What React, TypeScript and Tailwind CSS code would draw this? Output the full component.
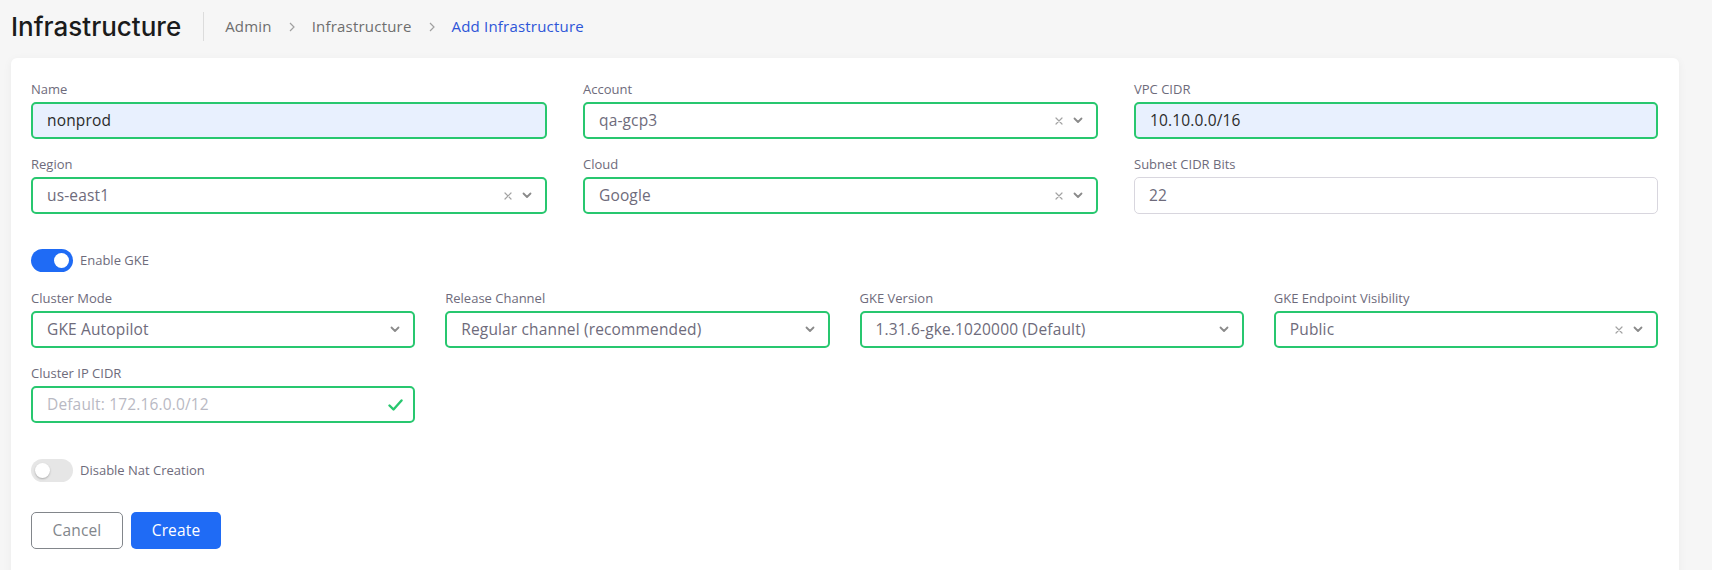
import type { ReactNode } from "react"

const green = "border-[#28c76f]"

function Label({ children }: { children: ReactNode }) {
  return <div className="mb-[4px] text-[13px] leading-[18px] text-[#6e6b7b]">{children}</div>
}

function ClearIcon() {
  return (
    <svg width="8" height="8" viewBox="0 0 8 8" className="shrink-0">
      <path d="M1 1L7 7M7 1L1 7" stroke="#a3a3a3" strokeWidth="1.2" strokeLinecap="round" />
    </svg>
  )
}

function Chevron() {
  return (
    <svg width="10" height="7" viewBox="0 0 10 7" className="shrink-0">
      <path d="M1.5 1.5L5 5L8.5 1.5" stroke="#8a8a8a" strokeWidth="1.8" fill="none" strokeLinecap="round" strokeLinejoin="round" />
    </svg>
  )
}

function Check() {
  return (
    <svg width="15" height="12" viewBox="0 0 15 12" className="shrink-0">
      <path d="M1.5 6.5L5.5 10.5L13.5 1.5" stroke="#28c76f" strokeWidth="2.4" fill="none" strokeLinecap="round" strokeLinejoin="round" />
    </svg>
  )
}

function Crumb() {
  return (
    <span className="mx-[17px]">
      <svg width="6" height="10" viewBox="0 0 6 10">
        <path d="M1 1L5 5L1 9" stroke="#a0a0a0" strokeWidth="1.2" fill="none" />
      </svg>
    </span>
  )
}

const valueText = "text-[15.5px] tracking-[0.15px]"

function TextInput({ value, autofill, valid = true }: { value: string; autofill?: boolean; valid?: boolean }) {
  return (
    <div
      className={`flex h-[37px] items-center rounded-[5px] ${
        valid ? `border-2 ${green} pl-[14px]` : "border border-[#d8d6de] pl-[14px]"
      } ${autofill ? "bg-[#e8f0fe] text-[#2b2b2b]" : "bg-white text-[#6e6b7b]"} ${valueText}`}
    >
      {value}
    </div>
  )
}

function Select({ value, clearable = true }: { value: string; clearable?: boolean }) {
  return (
    <div className={`flex h-[37px] items-center rounded-[5px] border-2 ${green} bg-white pl-[14px] pr-[13px]`}>
      <span className={`flex-1 truncate text-[#6e6b7b] ${valueText}`}>{value}</span>
      {clearable && <ClearIcon />}
      <span className={clearable ? "ml-[10px]" : ""}>
        <Chevron />
      </span>
    </div>
  )
}

function Toggle({ on, label }: { on: boolean; label: string }) {
  return (
    <div className="flex items-center">
      <div
        className={`flex h-[23px] w-[42px] items-center rounded-full px-[4px] ${
          on ? "justify-end bg-[#1f6bf5]" : "justify-start bg-[#e6e6e6]"
        }`}
      >
        <div className={`h-[15px] w-[15px] rounded-full bg-white ${on ? "" : "shadow-[0_1px_2px_rgba(0,0,0,0.25)]"}`} />
      </div>
      <span className="ml-[7px] text-[13px] text-[#6e6b7b]">{label}</span>
    </div>
  )
}

export default function App() {
  return (
    <div className="h-[570px] overflow-hidden bg-[#f6f6f6] font-['Open_Sans',sans-serif]">
      <div className="flex h-[50px] items-center pl-[11px] pt-[3px]">
        <h1 className="font-['Inter',sans-serif] text-[26px] font-medium text-[#1b1b1b]">Infrastructure</h1>
        <div className="ml-[22px] h-[29px] w-px bg-[#dcdcdc]" />
        <nav className="ml-[21px] flex items-center text-[15px] tracking-[0.2px] text-[#6e6e6e]">
          <span>Admin</span>
          <Crumb />
          <span>Infrastructure</span>
          <Crumb />
          <span className="text-[#2d55d8]">Add Infrastructure</span>
        </nav>
      </div>

      <div className="ml-[11px] mr-[33px] mt-[8px] rounded-[6px] bg-white pb-[40px] pl-[20px] pr-[21px] pt-[22px] shadow-[0_2px_10px_rgba(0,0,0,0.05)]">
        <div className="grid grid-cols-[516px_515px_1fr] gap-x-[36px] gap-y-[16px]">
          <div>
            <Label>Name</Label>
            <TextInput value="nonprod" autofill />
          </div>
          <div>
            <Label>Account</Label>
            <Select value="qa-gcp3" />
          </div>
          <div>
            <Label>VPC CIDR</Label>
            <TextInput value="10.10.0.0/16" autofill />
          </div>
          <div>
            <Label>Region</Label>
            <Select value="us-east1" />
          </div>
          <div>
            <Label>Cloud</Label>
            <Select value="Google" />
          </div>
          <div>
            <Label>Subnet CIDR Bits</Label>
            <TextInput value="22" valid={false} />
          </div>
        </div>

        <div className="mt-[35px]">
          <Toggle on label="Enable GKE" />
        </div>

        <div className="mt-[17px] grid grid-cols-4 gap-x-[30px] gap-y-[16px]">
          <div>
            <Label>Cluster Mode</Label>
            <Select value="GKE Autopilot" clearable={false} />
          </div>
          <div>
            <Label>Release Channel</Label>
            <Select value="Regular channel (recommended)" clearable={false} />
          </div>
          <div>
            <Label>GKE Version</Label>
            <Select value="1.31.6-gke.1020000 (Default)" clearable={false} />
          </div>
          <div>
            <Label>GKE Endpoint Visibility</Label>
            <Select value="Public" />
          </div>
          <div>
            <Label>Cluster IP CIDR</Label>
            <div className={`flex h-[37px] items-center rounded-[5px] border-2 ${green} bg-white pl-[14px] pr-[10px]`}>
              <span className={`flex-1 text-[#b9b9c3] ${valueText}`}>Default: 172.16.0.0/12</span>
              <Check />
            </div>
          </div>
        </div>

        <div className="mt-[36px]">
          <Toggle on={false} label="Disable Nat Creation" />
        </div>

        <div className="mt-[30px] flex gap-[8px]">
          <button className={`h-[37px] w-[92px] rounded-[5px] border border-[#82868b] bg-white text-[#82868b] ${valueText}`}>
            Cancel
          </button>
          <button className={`h-[37px] w-[90px] rounded-[5px] bg-[#1f6bf5] font-medium text-white ${valueText}`}>
            Create
          </button>
        </div>
      </div>
    </div>
  )
}
